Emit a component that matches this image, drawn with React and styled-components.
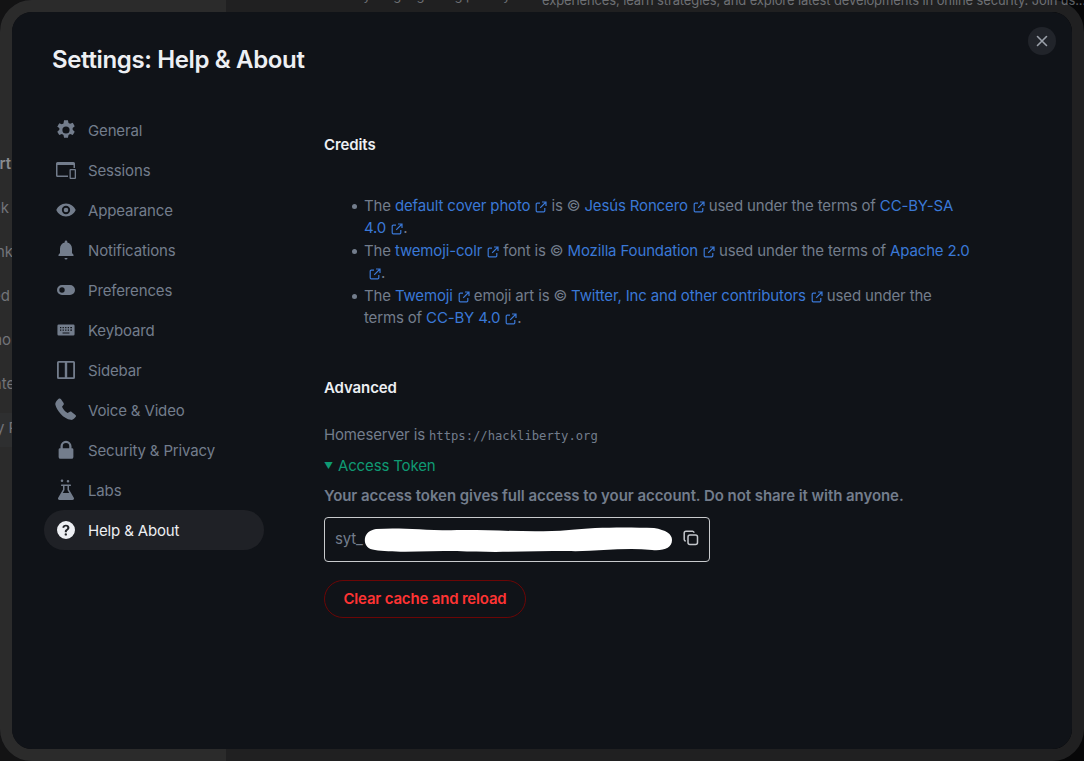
import React from 'react'
import styled, { createGlobalStyle } from 'styled-components'

const GlobalStyle = createGlobalStyle`
  html, body {
    margin: 0;
    padding: 0;
    background: #070708;
  }
  * { box-sizing: border-box; }
`

const Page = styled.div`
  position: relative;
  display: flex;
  width: 1084px;
  height: 761px;
  overflow: hidden;
  font-family: Inter, 'Liberation Sans', sans-serif;
  background: #070708;
`

const PageSide = styled.div`
  flex: none;
  width: 226px;
  padding-top: 154px;
  background: #131314;
  color: #62646a;
  font-size: 15px;
`

const PageSideRow = styled.div`
  width: ${props => props.$end + 200}px;
  height: ${props => (props.$active ? 34 : 44)}px;
  margin-left: -200px;
  padding-top: ${props => (props.$active ? 5 : 0)}px;
  line-height: 20px;
  text-align: right;
  white-space: nowrap;
  font-weight: ${props => (props.$bold ? 600 : 400)};
  color: ${props => (props.$bold ? '#7c7e84' : '#62646a')};
`

const PageSideActive = styled.div`
  margin-top: -5px;
  background: #171819;
`

const PageMain = styled.div`
  flex: 1;
  min-width: 0;
  display: flex;
  flex-direction: column;
  margin-top: -15px;
  color: #5e6065;
  font-size: 13px;
  line-height: 20px;
  letter-spacing: -0.12px;
  white-space: nowrap;
`

const PageMainLine = styled.div`
  margin-top: ${props => props.$top}px;
  padding-left: ${props => props.$left}px;
`

const Modal = styled.div`
  position: absolute;
  inset: 0;
  border: 12px solid rgba(255, 255, 255, 0.1);
  border-radius: 32px;
`

const Panel = styled.div`
  position: relative;
  display: flex;
  flex-direction: column;
  height: 100%;
  border-radius: 20px;
  background: #101318;
  overflow: hidden;
`

const Title = styled.h1`
  margin: 0;
  padding: 33px 0 0 40px;
  height: 93px;
  font-size: 24px;
  line-height: 30px;
  font-weight: 600;
  letter-spacing: -0.36px;
  color: #edeff3;
`

const CloseButton = styled.button`
  position: absolute;
  top: 15px;
  right: 16px;
  display: flex;
  align-items: center;
  justify-content: center;
  width: 28px;
  height: 28px;
  padding: 0;
  border: 0;
  border-radius: 50%;
  background: #21242a;
  color: #9aa0a9;
`

const Body = styled.div`
  display: flex;
`

const Sidebar = styled.nav`
  display: flex;
  flex-direction: column;
  flex: none;
  width: 220px;
  margin: 5px 0 0 32px;
`

const NavItem = styled.div`
  display: flex;
  align-items: center;
  gap: 10px;
  height: 40px;
  padding-left: 10px;
  border-radius: 20px;
  font-size: 15px;
  letter-spacing: -0.15px;
  color: ${props => (props.$active ? '#edeff3' : '#737d8c')};
  background: ${props => (props.$active ? '#1f2126' : 'transparent')};
`

const NavIcon = styled.svg`
  flex: none;
  width: 24px;
  height: 24px;
  fill: ${props => (props.$active ? '#edeff3' : '#737d8c')};
`

const Content = styled.main`
  flex: 1;
  padding: 29px 0 0 60px;
  font-size: 15px;
  line-height: 22.5px;
  letter-spacing: -0.15px;
  color: #737d8c;
`

const Section = styled.section`
  margin-bottom: ${props => props.$gap}px;
`

const SectionTitle = styled.h2`
  margin: 0 0 ${props => props.$gap}px;
  font-size: 15px;
  line-height: 22.5px;
  font-weight: 600;
  letter-spacing: -0.1px;
  color: #edeff3;
`

const Credits = styled.ul`
  width: 650px;
  margin: 0;
  padding-left: 40px;
  list-style: none;
`

const CreditItem = styled.li`
  position: relative;
  &::before {
    content: '';
    position: absolute;
    left: -12px;
    top: 9px;
    width: 5px;
    height: 5px;
    border-radius: 50%;
    background: #737d8c;
  }
`

const Link = styled.a`
  color: #3a78d6;
`

const ExternalIcon = styled.svg`
  display: inline-block;
  width: 12px;
  height: 12px;
  margin-left: 5px;
  vertical-align: -2px;
  fill: none;
  stroke: currentColor;
  stroke-width: 1.2;
`

const Homeserver = styled.div`
  margin-bottom: 7px;
`

const Mono = styled.code`
  font-family: 'DejaVu Sans Mono', 'Liberation Mono', monospace;
  font-size: 12.2px;
  letter-spacing: 0;
`

const TokenToggle = styled.div`
  display: flex;
  align-items: center;
  gap: 5px;
  color: #0f9a73;
  margin-bottom: 8px;
`

const Triangle = styled.span`
  font-size: 9px;
  width: 9px;
`

const Warning = styled.div`
  font-weight: 600;
  letter-spacing: -0.06px;
  margin-bottom: 9px;
`

const TokenBox = styled.div`
  position: relative;
  display: flex;
  align-items: center;
  width: 386px;
  height: 45px;
  padding: 0 10px;
  border: 1px solid #c8cacd;
  border-radius: 4px;
  color: #737d8c;
  margin-bottom: 18px;
`

const Redaction = styled.svg`
  position: absolute;
  left: 39px;
  top: 8px;
  width: 310px;
  height: 28px;
  fill: #fff;
`

const CopyIcon = styled.svg`
  position: absolute;
  right: 10px;
  top: 12px;
  width: 16px;
  height: 16px;
  fill: none;
  stroke: #c3c6cb;
  stroke-width: 1.5;
`

const DangerButton = styled.button`
  display: block;
  width: 202px;
  height: 38px;
  padding: 0;
  border: 1px solid #6b0606;
  border-radius: 19px;
  background: transparent;
  color: #ff3333;
  font-family: inherit;
  font-size: 15px;
  font-weight: 600;
  letter-spacing: -0.18px;
`

const navItems = [
  { label: 'General', box: '1 1 22 22', evenodd: true, d: 'M10.2 3h3.6l.5 2.500 1.500.8 2.400-.9 1.800 3.100-1.900 1.700v1.600l1.900 1.700-1.800 3.100-2.400-.9-1.500.8-.5 2.500h-3.600l-.5-2.500-1.500-.8-2.400.9-1.800-3.100 1.900-1.700v-1.600L4 9l1.800-3.100 2.400.9 1.500-.8zM12 8.700a3.300 3.300 0 1 0 0 6.600 3.300 3.300 0 0 0 0-6.600z' },
  { label: 'Sessions', box: '0 0 24 24', evenodd: true, d: 'M2 5.500A1.500 1.500 0 0 1 3.500 4h16A1.500 1.500 0 0 1 21 5.500V10h-1.500V7H3.500v10.500H14V19H3.500A1.500 1.500 0 0 1 2 17.500zM16.500 11H21a1 1 0 0 1 1 1v8a1 1 0 0 1-1 1h-4.500a1 1 0 0 1-1-1v-8a1 1 0 0 1 1-1zm.300 1.300v7.400h3.900v-7.400z' },
  { label: 'Appearance', box: '-1 -1 26 26', evenodd: true, d: 'M12 5C7 5 3 8.400 1.500 12 3 15.600 7 19 12 19s9-3.400 10.500-7C21 8.400 17 5 12 5zm0 2.500a4.500 4.500 0 1 1 0 9 4.500 4.500 0 0 1 0-9zm0 2a2.500 2.500 0 1 0 0 5 2.500 2.500 0 0 0 0-5z' },
  { label: 'Notifications', box: '0 0 24 24', d: 'M12 2.500a1.300 1.300 0 0 1 1.300 1.300v.7c2.900.7 4.700 3.200 4.700 6.200v4.300l1.500 1.700v1.300h-15v-1.300L6 15v-4.300c0-3 1.800-5.500 4.700-6.200v-.7A1.300 1.300 0 0 1 12 2.500zM10.500 20h3a1.500 1.500 0 0 1-3 0z' },
  { label: 'Preferences', box: '0 0 24 24', evenodd: true, d: 'M8 7h8a5 5 0 0 1 0 10H8A5 5 0 0 1 8 7zm0 2.300a2.700 2.700 0 1 0 0 5.400 2.700 2.700 0 0 0 0-5.400z' },
  { label: 'Keyboard', box: '-2 -2 28 28', evenodd: true, d: 'M3.500 5.500h17A1.500 1.500 0 0 1 22 7v10a1.500 1.500 0 0 1-1.500 1.500h-17A1.500 1.500 0 0 1 2 17V7a1.500 1.500 0 0 1 1.500-1.500zM5 8.500V10h1.500V8.500zm3 0V10h1.500V8.500zm3 0V10h1.500V8.500zm3 0V10h1.500V8.500zm3 0V10h2V8.500zM5 11.500V13h1.500v-1.500zm3 0V13h1.500v-1.500zm3 0V13h1.500v-1.500zm3 0V13h1.500v-1.500zm3 0V13h2v-1.500zM8 14.800V16h8v-1.200z' },
  { label: 'Sidebar', box: '0 0 24 24', evenodd: true, d: 'M4.500 3h15A1.500 1.500 0 0 1 21 4.500v15a1.500 1.500 0 0 1-1.500 1.500h-15A1.500 1.500 0 0 1 3 19.500v-15A1.500 1.500 0 0 1 4.500 3zm.300 1.800v14.400h6V4.800zm8.400 0v14.400h6V4.800z' },
  { label: 'Voice & Video', box: '2 2 20 20', d: 'M6.200 2.500c.5-.3 1.100-.2 1.500.3l2.300 3.300c.3.500.3 1 0 1.500l-1.300 1.700c.9 2 2.400 3.900 4.600 5.300l1.900-1.100c.5-.3 1.100-.2 1.500.1l3.200 2.500c.5.400.6 1.100.2 1.600-.9 1.400-2.300 2.800-4 2.500C9.500 19.200 4.500 12.500 3.200 7.800c-.5-2 1.500-4.200 3-5.300z' },
  { label: 'Security & Privacy', box: '-1 -1 26 26', evenodd: true, d: 'M6 10V8a6 6 0 0 1 12 0v2h.5A1.500 1.500 0 0 1 20 11.500v8a2 2 0 0 1-2 2H6a2 2 0 0 1-2-2v-8A1.500 1.500 0 0 1 5.500 10zm2.500 0h7V8a3.500 3.500 0 0 0-7 0z' },
  { label: 'Labs', box: '0 0 24 24', evenodd: true, d: 'M8 1.500a1.300 1.300 0 1 1 0 2.600 1.300 1.300 0 0 1 0-2.600zm6 .5a1.300 1.300 0 1 1 0 2.600 1.300 1.300 0 0 1 0-2.600zM7.500 6.500h9a.8.8 0 0 1 0 1.500H15v3.500l4.800 8.200c.6 1-.1 2.300-1.300 2.300h-13c-1.200 0-1.900-1.300-1.300-2.300L9 11.500V8H7.500a.8.8 0 0 1 0-1.500zm3 1.500v4L8.800 15h6.400l-1.700-3V8z' },
  { label: 'Help & About', active: true, box: '0 0 24 24', evenodd: true, d: 'M12 3a9 9 0 1 1 0 18 9 9 0 0 1 0-18zm-.1 3.700c-2 0-3.400 1.100-3.600 2.900l1.900.3c.1-.9.7-1.400 1.600-1.400s1.500.5 1.500 1.200c0 .7-.4 1-1.100 1.600-1.100.8-1.400 1.300-1.400 2.500v.4h2v-.3c0-.6.200-.9.900-1.400 1.100-.8 1.700-1.500 1.700-2.900 0-1.800-1.500-2.900-3.500-2.900zm-.1 8.500a1.200 1.200 0 1 0 0 2.400 1.200 1.200 0 0 0 0-2.400z' },
]

const External = () => (
  <ExternalIcon viewBox="0 0 12 12">
    <path d="M5 2.200H2.200a1 1 0 0 0-1 1v6.600a1 1 0 0 0 1 1h6.600a1 1 0 0 0 1-1V7" />
    <path d="M7 1h4v4M11 1 5.200 6.800" />
  </ExternalIcon>
)

const ExtLink = ({ children }) => (
  <>
    <Link>{children}</Link>
    <Link><External /></Link>
  </>
)

const App = () => (
  <Page>
    <GlobalStyle />
    <PageSide>
      <PageSideRow $end={11} $bold>Support</PageSideRow>
      <PageSideRow $end={9}>Link</PageSideRow>
      <PageSideRow $end={13}>Bank</PageSideRow>
      <PageSideRow $end={61}>Featured Topics</PageSideRow>
      <PageSideRow $end={11}>Techno</PageSideRow>
      <PageSideRow $end={29}>Content</PageSideRow>
      <PageSideActive>
        <PageSideRow $end={51} $active>Privacy Policy</PageSideRow>
      </PageSideActive>
    </PageSide>
    <PageMain>
      <PageMainLine $left={60} $top={0}>Discuss everything regarding privacy</PageMainLine>
      <PageMainLine $left={316} $top={-15}>experiences, learn strategies, and explore latest developments in online security. Join us...</PageMainLine>
    </PageMain>
    <Modal>
      <Panel>
        <Title>Settings: Help &amp; About</Title>
        <CloseButton aria-label="Close">
          <svg width="14" height="14" viewBox="0 0 14 14" fill="none" stroke="currentColor" strokeWidth="1.6" strokeLinecap="round">
            <path d="M2.500 2.500l9 9M11.500 2.500l-9 9" />
          </svg>
        </CloseButton>
        <Body>
          <Sidebar>
            {navItems.map(item => (
              <NavItem key={item.label} $active={item.active}>
                <NavIcon viewBox={item.box} $active={item.active}>
                  <path d={item.d} fillRule={item.evenodd ? 'evenodd' : 'nonzero'} />
                </NavIcon>
                {item.label}
              </NavItem>
            ))}
          </Sidebar>
          <Content>
            <Section $gap={47}>
              <SectionTitle $gap={38}>Credits</SectionTitle>
              <Credits>
                <CreditItem>The <ExtLink>default cover photo</ExtLink> is © <ExtLink>Jesús Roncero</ExtLink> used under the terms of <ExtLink>CC-BY-SA 4.0</ExtLink>.</CreditItem>
                <CreditItem>The <ExtLink>twemoji-colr</ExtLink> font is © <ExtLink>Mozilla Foundation</ExtLink> used under the terms of <ExtLink>Apache 2.0</ExtLink>.</CreditItem>
                <CreditItem>The <ExtLink>Twemoji</ExtLink> emoji art is © <ExtLink>Twitter, Inc and other contributors</ExtLink> used under the terms of <ExtLink>CC-BY 4.0</ExtLink>.</CreditItem>
              </Credits>
            </Section>
            <Section $gap={0}>
              <SectionTitle $gap={25}>Advanced</SectionTitle>
              <Homeserver>Homeserver is <Mono>https://hackliberty.org</Mono></Homeserver>
              <TokenToggle><Triangle>▼</Triangle>Access Token</TokenToggle>
              <Warning>Your access token gives full access to your account. Do not share it with anyone.</Warning>
              <TokenBox>
                syt_
                <Redaction viewBox="0 0 310 28">
                  <path d="M12 3C40 1 60 5 100 4c40 0 70 3 105 0 25-3 60-3 85-2 12 2 18 6 18 12 0 8-8 11-20 10-30-3-55 2-85 1-35 0-70 2-110 0-30 0-65 2-82-1C3 23 0 18 1 12 2 7 6 4 12 3z" />
                </Redaction>
                <CopyIcon viewBox="0 0 16 16">
                  <rect x="5" y="5" width="9.5" height="9.5" rx="2" />
                  <path d="M11 2.800A1.600 1.600 0 0 0 9.500 1.200H3A1.800 1.800 0 0 0 1.200 3v6.500A1.600 1.600 0 0 0 2.800 11" />
                </CopyIcon>
              </TokenBox>
              <DangerButton>Clear cache and reload</DangerButton>
            </Section>
          </Content>
        </Body>
      </Panel>
    </Modal>
  </Page>
)

export default App
